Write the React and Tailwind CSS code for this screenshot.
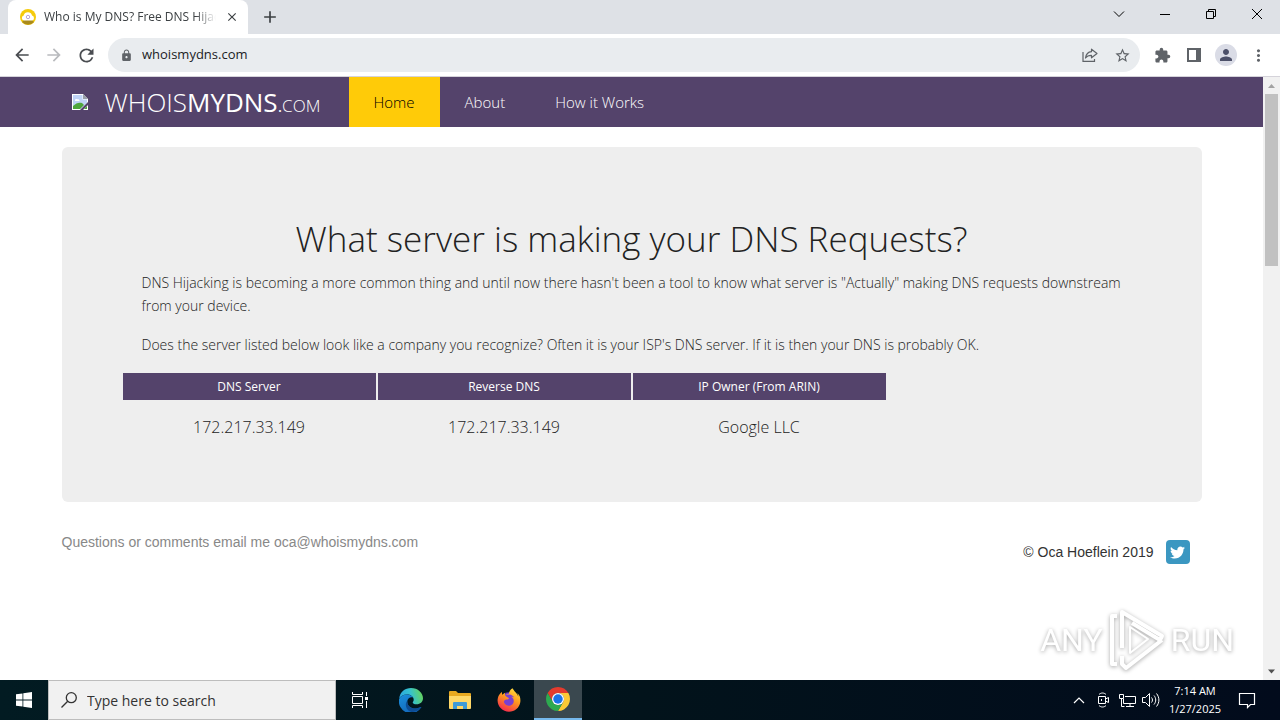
import React, { useState } from 'react';
import {
  MdArrowBack,
  MdArrowForward,
  MdRefresh,
  MdLock,
  MdStarBorder,
  MdExtension,
  MdPerson,
  MdMoreVert,
  MdAdd,
  MdClose,
} from 'react-icons/md';
import { FaTwitter, FaFirefoxBrowser } from 'react-icons/fa6';

const navLinks = [
  { label: 'Home', active: true },
  { label: 'About', active: false },
  { label: 'How it Works', active: false },
];

const results = [
  { label: 'DNS Server', value: '172.217.33.149' },
  { label: 'Reverse DNS', value: '172.217.33.149' },
  { label: 'IP Owner (From ARIN)', value: 'Google LLC' },
];

const Favicon = () => (
  <svg viewBox="0 0 16 16" className="h-4 w-4 shrink-0">
    <circle cx="8" cy="8" r="8" fill="#f5cb0c" />
    <path d="M2 13a8 8 0 0 0 12 0l-2-2H4z" fill="#a98a1c" />
    <path d="M4 11.5a2.5 2.5 0 0 1-.3-4.9A4.3 4.3 0 0 1 12 6.500a2.600 2.600 0 0 1 .2 5z" fill="#fff" />
    <circle cx="8" cy="8" r="1.700" fill="none" stroke="#b9a7d6" />
  </svg>
);

const BrokenImage = () => (
  <svg viewBox="0 0 16 16" className="h-4 w-4 shrink-0">
    <path d="M0 0h11l5 5v11H0z" fill="#fff" />
    <path d="M1 1h9.500v4.500H15V9L9 15H1z" fill="#bfd3f5" />
    <path d="M3 6.500a1.500 1.500 0 0 1 2.500-1.200A1.500 1.500 0 0 1 7.500 7H3z" fill="#fff" />
    <path d="M1 15v-3c3-3 6-4 9-3l2 2-4 4z" fill="#4fa63c" />
    <path d="M16 8v3l-5 5H8z" fill="#54436b" />
    <path d="M11 0v5h5z" fill="#9aa0a8" />
    <path d="M12 15l3-3v3z" fill="#4fa63c" />
  </svg>
);

const ChromeLogo = () => (
  <svg viewBox="0 0 48 48" className="h-6 w-6">
    <path d="M24 0a24 24 0 0 1 20.780 12H24a12 12 0 0 0-10.390 18L3.220 12A24 24 0 0 1 24 0z" fill="#e33b2e" />
    <path d="M44.780 12A24 24 0 0 1 24 48l10.390-18A12 12 0 0 0 24 12z" fill="#fcc934" />
    <path d="M24 48A24 24 0 0 1 3.220 12l10.390 18a12 12 0 0 0 20.780 0z" fill="#2da94f" />
    <circle cx="24" cy="24" r="12" fill="#fff" />
    <circle cx="24" cy="24" r="9.500" fill="#1a73e8" />
  </svg>
);

const FolderLogo = () => (
  <svg viewBox="0 0 22 20" className="h-5 w-[22px]">
    <path d="M0 2a1 1 0 0 1 1-1h6l2 2h12a1 1 0 0 1 1 1v14H0z" fill="#e8a920" />
    <path d="M0 6h22v12a1 1 0 0 1-1 1H1a1 1 0 0 1-1-1z" fill="#ffd868" />
    <path d="M4 19v-6a1 1 0 0 1 1-1h12a1 1 0 0 1 1 1v6h-4v-3H8v3z" fill="#3f9bd8" />
  </svg>
);

const EdgeLogo = () => (
  <svg viewBox="0 0 24 24" className="h-6 w-6">
    <defs>
      <linearGradient id="edgeTop" x1="0" y1="0.600" x2="1" y2="0.400">
        <stop offset="0" stopColor="#2aa5e0" />
        <stop offset="0.500" stopColor="#35c1d0" />
        <stop offset="1" stopColor="#66d45a" />
      </linearGradient>
      <linearGradient id="edgeSide" x1="0" y1="0" x2="0.600" y2="1">
        <stop offset="0" stopColor="#1b8fdc" />
        <stop offset="1" stopColor="#1266b8" />
      </linearGradient>
    </defs>
    <path d="M.2 10.500C1 4 6 0 12 0c7 0 12 5 12 10.300 0 3.700-3 6-6.300 6-2.700 0-4-1-4-1.800 0-.7 1-1 1-2.800C14.700 8.500 11.500 6.500 8 6.500c-3.700 0-6.500 1.700-7.800 4z" fill="url(#edgeTop)" />
    <path d="M.1 11C1.500 8.200 4.500 6.500 8 6.500c3 0 5.300 1.300 6.200 3.200C12 8.500 8.800 9.700 8.300 13c-.7 4.500 3.700 8 8.700 7.500 2.200-.2 3.700-1 4.700-1.500.5-.2.700.2.400.6A12 12 0 0 1 .1 11z" fill="url(#edgeSide)" />
    <path d="M8.400 12.500C7.500 17 12 20.800 17 20.500c2.200-.2 3.700-1 4.700-1.500.5-.2.700.2.400.6-2.400 3.100-6 4.600-9.600 4.400-5-1.200-7.500-7.500-4.100-11.500z" fill="#0d4c94" />
  </svg>
);

const FirefoxLogo = () => (
  <span className="grid place-items-center rounded-full bg-[radial-gradient(circle,#7a3fd0_40%,transparent_50%)]">
    <svg className="absolute h-0 w-0">
      <defs>
        <linearGradient id="firefox" x1="0.800" y1="0" x2="0.300" y2="1">
          <stop offset="0" stopColor="#ffe040" />
          <stop offset="0.450" stopColor="#ff9a1f" />
          <stop offset="1" stopColor="#f5274e" />
        </linearGradient>
      </defs>
    </svg>
    <FaFirefoxBrowser size={24} fill="url(#firefox)" />
  </span>
);

const TabStrip = () => (
  <div className="flex h-[34px] shrink-0 items-stretch bg-[#dee1e6]">
    <div className="ml-2 flex w-60 items-center rounded-t-lg bg-white pr-2 pl-3 text-[12px] text-[#3c4043]">
      <Favicon />
      <span className="ml-2 flex-1 overflow-hidden whitespace-nowrap [mask-image:linear-gradient(to_right,black_88%,transparent)]">
        Who is My DNS? Free DNS Hijack
      </span>
      <button aria-label="Close tab" className="ml-2 grid h-4 w-4 place-items-center">
        <MdClose size={14} />
      </button>
    </div>
    <button aria-label="New tab" className="ml-3 text-[#3c4043]">
      <MdAdd size={20} />
    </button>
    <div className="ml-auto flex text-black">
      <button aria-label="Search tabs" className="grid w-[46px] place-items-center pb-[6px]">
        <svg viewBox="0 0 12 12" className="h-3 w-3" fill="none" stroke="currentColor">
          <path d="M1 3.500l5 5 5-5" />
        </svg>
      </button>
      <button aria-label="Minimize" className="grid w-[46px] place-items-center pb-[6px]">
        <svg viewBox="0 0 10 10" className="h-[10px] w-[10px]" stroke="currentColor">
          <path d="M0 5.500h10" />
        </svg>
      </button>
      <button aria-label="Restore" className="grid w-[46px] place-items-center pb-[6px]">
        <svg viewBox="0 0 10 10" className="h-[10px] w-[10px]" fill="none" stroke="currentColor">
          <path d="M.5 2.500h7v7h-7zM2.500 2.500v-2h7v7h-2" />
        </svg>
      </button>
      <button aria-label="Close" className="grid w-[46px] place-items-center pb-[6px]">
        <svg viewBox="0 0 10 10" className="h-[10px] w-[10px]" stroke="currentColor">
          <path d="M0 0l10 10M10 0L0 10" />
        </svg>
      </button>
    </div>
  </div>
);

const Toolbar = () => {
  const [url, setUrl] = useState('whoismydns.com');

  return (
    <div className="flex h-[43px] shrink-0 items-center border-b border-[#d5d3da] bg-white pr-3 text-[#5f6368]">
      <button aria-label="Back" className="ml-3 grid w-5 place-items-center text-[#4a4d51]">
        <MdArrowBack size={20} />
      </button>
      <button aria-label="Forward" className="ml-3 grid w-5 place-items-center text-[#b9bbbe]">
        <MdArrowForward size={20} />
      </button>
      <button aria-label="Reload" className="ml-3 grid w-5 place-items-center text-[#4a4d51]">
        <MdRefresh size={21} />
      </button>
      <div className="ml-3 flex h-[34px] flex-1 items-center rounded-full bg-[#e9ecef] pr-[9px] pl-3">
        <MdLock size={13} />
        <input
          aria-label="Address"
          value={url}
          onChange={(e) => setUrl(e.target.value)}
          className="ml-[9px] min-w-0 flex-1 bg-transparent text-[13px] text-[#202124] outline-none"
        />
        <button aria-label="Share" className="mr-4">
          <svg viewBox="0 0 16 16" className="h-4 w-4" fill="none" stroke="currentColor" strokeWidth="1.200">
            <path d="M1 5v9.400h11.500V12" />
            <path d="M9.500 2.200L15 6.500l-5.500 4.300V8.300C7 8.200 5 9 3.500 11 4 7.500 6 5 9.500 4.700z" strokeLinejoin="round" />
          </svg>
        </button>
        <button aria-label="Bookmark this tab">
          <MdStarBorder size={17} />
        </button>
      </div>
      <button aria-label="Extensions" className="ml-3 grid w-5 place-items-center">
        <MdExtension size={17} />
      </button>
      <button aria-label="Side panel" className="ml-3 grid w-5 place-items-center">
        <svg viewBox="0 0 14 14" className="h-[14px] w-[14px]">
          <path d="M0 0h14v14H0zM2 2v10h7V2z" fill="currentColor" fillRule="evenodd" />
        </svg>
      </button>
      <button aria-label="Profile" className="ml-[11px] grid h-[22px] w-[22px] place-items-center rounded-full bg-[#dadce6] text-[#4c5069]">
        <MdPerson size={18} />
      </button>
      <button aria-label="Menu" className="ml-[11px] grid w-5 place-items-center">
        <MdMoreVert size={19} />
      </button>
    </div>
  );
};

const SiteNav = () => (
  <header className="bg-[#54436b] text-white">
    <div className="mx-auto flex h-[50px] max-w-[1140px] items-stretch">
      <a href="#" className="flex items-center pl-[10px]">
        <BrokenImage />
        <span className="ml-[17px] w-[244px] text-[26px] font-light whitespace-nowrap">
          WHOIS<span className="font-normal">MYDNS</span>
          <span className="text-[17px]">
            <span className="font-normal">.</span>COM
          </span>
        </span>
      </a>
      <nav className="flex text-[15px] font-light">
        {navLinks.map((link) => (
          <a
            key={link.label}
            href="#"
            className={`flex items-center px-[25px] whitespace-nowrap ${link.active ? 'bg-[#ffcb08] text-black' : ''}`}
          >
            {link.label}
          </a>
        ))}
      </nav>
    </div>
  </header>
);

const ResultsTable = () => (
  <table className="table-fixed border-separate border-spacing-x-[2px] border-spacing-y-0 text-center">
    <thead>
      <tr>
        {results.map((item) => (
          <th key={item.label} scope="col" className="h-[27px] w-[253px] bg-[#54436b] text-[12px] font-normal text-white">
            {item.label}
          </th>
        ))}
      </tr>
    </thead>
    <tbody>
      <tr>
        {results.map((item) => (
          <td key={item.label} className="h-[54px] text-[16px] font-light">
            {item.value}
          </td>
        ))}
      </tr>
    </tbody>
  </table>
);

const Watermark = () => (
  <div className="absolute right-[46px] bottom-2 flex items-center gap-[5px] font-['Liberation_Sans_Narrow',Roboto,sans-serif] text-[32px] text-white [filter:drop-shadow(0_1px_2px_rgba(0,0,0,0.35))]">
    <span>ANY</span>
    <svg viewBox="0 0 58 64" className="h-16 w-[58px]" fill="none" stroke="currentColor" strokeWidth="4" strokeLinejoin="round">
      <path d="M9 8H4v48h5" />
      <path d="M14 40V4l40 24-2 4-28-17" />
      <path d="M54 32L18 60l-4-4v-8" />
      <path d="M22 19l18 12-18 14z" strokeWidth="2" />
    </svg>
    <span>RUN</span>
  </div>
);

const Scrollbar = () => (
  <div className="flex w-[17px] shrink-0 flex-col items-center bg-[#f1f1f1]">
    <svg viewBox="0 0 17 17" className="h-[17px] w-[17px]">
      <path d="M5 11l3.500-4 3.500 4z" fill="#a3a3a3" />
    </svg>
    <div className="h-[172px] w-[13px] bg-[#c1c1c1]" />
    <svg viewBox="0 0 17 17" className="mt-auto h-[17px] w-[17px]">
      <path d="M5 6.500l3.500 4 3.500-4z" fill="#505050" />
    </svg>
  </div>
);

const Page = () => (
  <div className="relative flex min-h-0 flex-1 bg-white">
    <div className="min-w-0 flex-1 overflow-hidden">
      <SiteNav />
      <main className="mx-auto mt-5 max-w-[1140px] rounded-md bg-[#eeeeee] px-[59px] pt-[72px] pb-12 text-[#222222]">
        <h1 className="text-center text-[35px] leading-[40px] font-light">What server is making your DNS Requests?</h1>
        <div className="mt-3 px-[21px] text-[14px] leading-[23px] font-light">
          <p>
            DNS Hijacking is becoming a more common thing and until now there hasn't been a tool to know what server is
            "Actually" making DNS requests downstream from your device.
          </p>
          <p className="mt-4 mb-[17px]">
            Does the server listed below look like a company you recognize? Often it is your ISP's DNS server. If it is
            then your DNS is probably OK.
          </p>
        </div>
        <ResultsTable />
      </main>
      <footer className="mx-auto mt-[30px] flex max-w-[1140px] justify-between pr-3 font-['Liberation_Sans',Arial,sans-serif] text-[14px]">
        <p className="text-[#888888]">Questions or comments email me oca@whoismydns.com</p>
        <div className="mt-2 flex items-center gap-3 text-[#333333]">
          <span>© Oca Hoeflein 2019</span>
          <a href="#" aria-label="Twitter" className="grid h-6 w-6 place-items-center rounded bg-[#3b97c1] text-white">
            <FaTwitter size={15} />
          </a>
        </div>
      </footer>
    </div>
    <Scrollbar />
    <Watermark />
  </div>
);

const Taskbar = () => (
  <div className="flex h-10 shrink-0 items-stretch bg-[linear-gradient(to_right,#021b22,#02131b_50%,#020b1c)] text-white">
    <button aria-label="Start" className="grid w-12 place-items-center">
      <svg viewBox="0 0 16 16" className="h-4 w-4" fill="currentColor">
        <path d="M0 2.300L6.500 1.400v6.200H0zM7.300 1.300L16 0v7.600H7.300zM0 8.400h6.500v6.200L0 13.700zM7.300 8.400H16V16l-8.700-1.300z" />
      </svg>
    </button>
    <label className="flex w-72 items-center border border-[#bdbdbd] bg-[#f1f1f1] pl-3 text-[#333333]">
      <svg viewBox="0 0 16 16" className="h-4 w-4 shrink-0" fill="none" stroke="currentColor" strokeWidth="1.300">
        <circle cx="10.300" cy="5.700" r="5" />
        <path d="M6.700 9.300L.5 15.500" />
      </svg>
      <input
        aria-label="Search"
        placeholder="Type here to search"
        className="ml-[10px] min-w-0 flex-1 bg-transparent text-[14px] outline-none placeholder:text-[#333333]"
      />
    </label>
    <button aria-label="Task view" className="grid w-12 place-items-center">
      <svg viewBox="0 0 17 16" className="h-4 w-[17px]" fill="none" stroke="currentColor">
        <path d="M.5 0v2.500h10V0M.5 16v-2.500h10V16M.5 4.500h10v7H.5zM14.500 0v4M14.500 9v7" />
        <path d="M13 5h3v3h-3z" fill="currentColor" stroke="none" />
      </svg>
    </button>
    <button aria-label="Edge" className="ml-[3px] grid w-12 place-items-center">
      <EdgeLogo />
    </button>
    <button aria-label="File Explorer" className="ml-px grid w-12 place-items-center">
      <FolderLogo />
    </button>
    <button aria-label="Firefox" className="ml-px grid w-12 place-items-center">
      <FirefoxLogo />
    </button>
    <button aria-label="Chrome" className="ml-px grid w-12 place-items-center border-b-2 border-[#76b9ed] bg-[#3a484f]">
      <ChromeLogo />
    </button>
    <div className="ml-auto flex items-center">
      <svg viewBox="0 0 12 12" className="h-3 w-3" fill="none" stroke="currentColor" strokeWidth="1.200">
        <path d="M1 9l5-5 5 5" />
      </svg>
      <svg viewBox="0 0 14 16" className="ml-3 h-4 w-[14px]" fill="none" stroke="currentColor">
        <path d="M1.500 4.500h7v7h-7zM8.500 7l3-1.500v5l-3-1.500M2 2.500c2-2 5-2 7 0M2 13.500c2 2 5 2 7 0" />
        <path d="M4.500 7v2" />
      </svg>
      <svg viewBox="0 0 17 15" className="ml-2 h-[15px] w-[17px]" fill="none" stroke="currentColor">
        <path d="M6 3.500h10.500v7H4.500V6M11 10.500v3M7 13.500h8M.5 1.500h4v4h-4zM2.500 5.500v8h3" />
      </svg>
      <svg viewBox="0 0 18 16" className="ml-[6px] h-4 w-[18px]" fill="none" stroke="currentColor">
        <path d="M.5 5.500h3l4-4v13l-4-4h-3zM9.500 5.500c1.300 1.500 1.300 3.500 0 5M12 3.500c2.300 2.700 2.300 6.300 0 9M14.500 1.500c3.200 4 3.200 9 0 13" />
      </svg>
      <div className="ml-[2px] w-[66px] text-center text-[11px] leading-[18px] whitespace-nowrap">
        <p>7:14 AM</p>
        <p>1/27/2025</p>
      </div>
      <button aria-label="Notifications" className="mr-6 ml-[10px]">
        <svg viewBox="0 0 18 18" className="h-[18px] w-[18px]" fill="none" stroke="currentColor" strokeWidth="1.200">
          <path d="M1.500 2.500h15v11h-4l-3 3v-3h-8z" />
        </svg>
      </button>
    </div>
  </div>
);

const App = () => (
  <div className="flex h-screen flex-col overflow-hidden font-['Open_Sans','Noto_Sans',sans-serif]">
    <TabStrip />
    <Toolbar />
    <Page />
    <Taskbar />
  </div>
);

export default App;
